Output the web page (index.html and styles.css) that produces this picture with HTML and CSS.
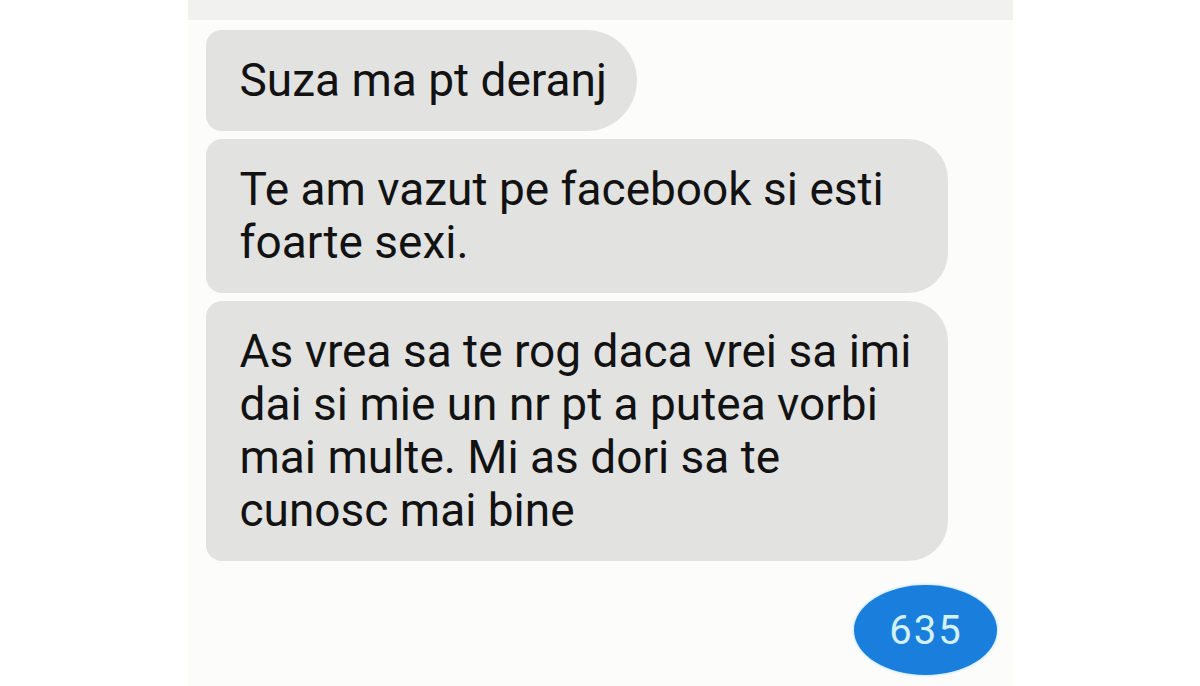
FILE: index.html
```html
<!DOCTYPE html>
<html lang="ro">
<head>
<meta charset="utf-8">
<title>Chat</title>
<link rel="stylesheet" href="styles.css">
</head>
<body>
<div class="page">
  <div class="phone">
    <div class="topbar"></div>
    <div class="thread">
      <div class="bubble in short">Suza ma pt deranj</div>
      <div class="bubble in">Te am vazut pe facebook si esti<br>foarte sexi.</div>
      <div class="bubble in">As vrea sa te rog daca vrei sa imi<br>dai si mie un nr pt a putea vorbi<br>mai multe. Mi as dori sa te<br>cunosc mai bine</div>
      <div class="bubble out">635</div>
    </div>
  </div>
</div>
</body>
</html>
```

FILE: styles.css
```css
html, body {
  margin: 0;
  padding: 0;
  background: #ffffff;
}
body {
  font-family: Roboto, "Liberation Sans", Arial, sans-serif;
  width: 1200px;
  height: 686px;
  overflow: hidden;
}
.page {
  display: flex;
  justify-content: center;
  height: 686px;
}
.phone {
  width: 825px;
  background: #fcfcfb;
  display: flex;
  flex-direction: column;
}
.topbar {
  height: 20px;
  background: #f1f2f0;
}
.thread {
  display: flex;
  flex-direction: column;
  align-items: flex-start;
  gap: 8px;
  padding: 10px 16px 0 18px;
}
.bubble {
  box-sizing: border-box;
  background: #e2e3e1;
  color: #121212;
  font-size: 46px;
  line-height: 53px;
  padding: 24px 30px 24px 34px;
  border-radius: 16px 40px 40px 16px;
  width: 742px;
  white-space: nowrap;
}
.bubble.short {
  width: auto;
  border-radius: 16px 52px 52px 16px;
}
.bubble.out {
  align-self: flex-end;
  width: 143px;
  height: 90px;
  margin-top: 16px;
  padding: 0 0 0 2px;
  display: flex;
  align-items: center;
  justify-content: center;
  background: #1a7fdc;
  color: #d4f1f1;
  border-radius: 50%;
  font-size: 40px;
  letter-spacing: 2px;
  box-shadow: 0 0 3px #8fd3f3;
}
```
